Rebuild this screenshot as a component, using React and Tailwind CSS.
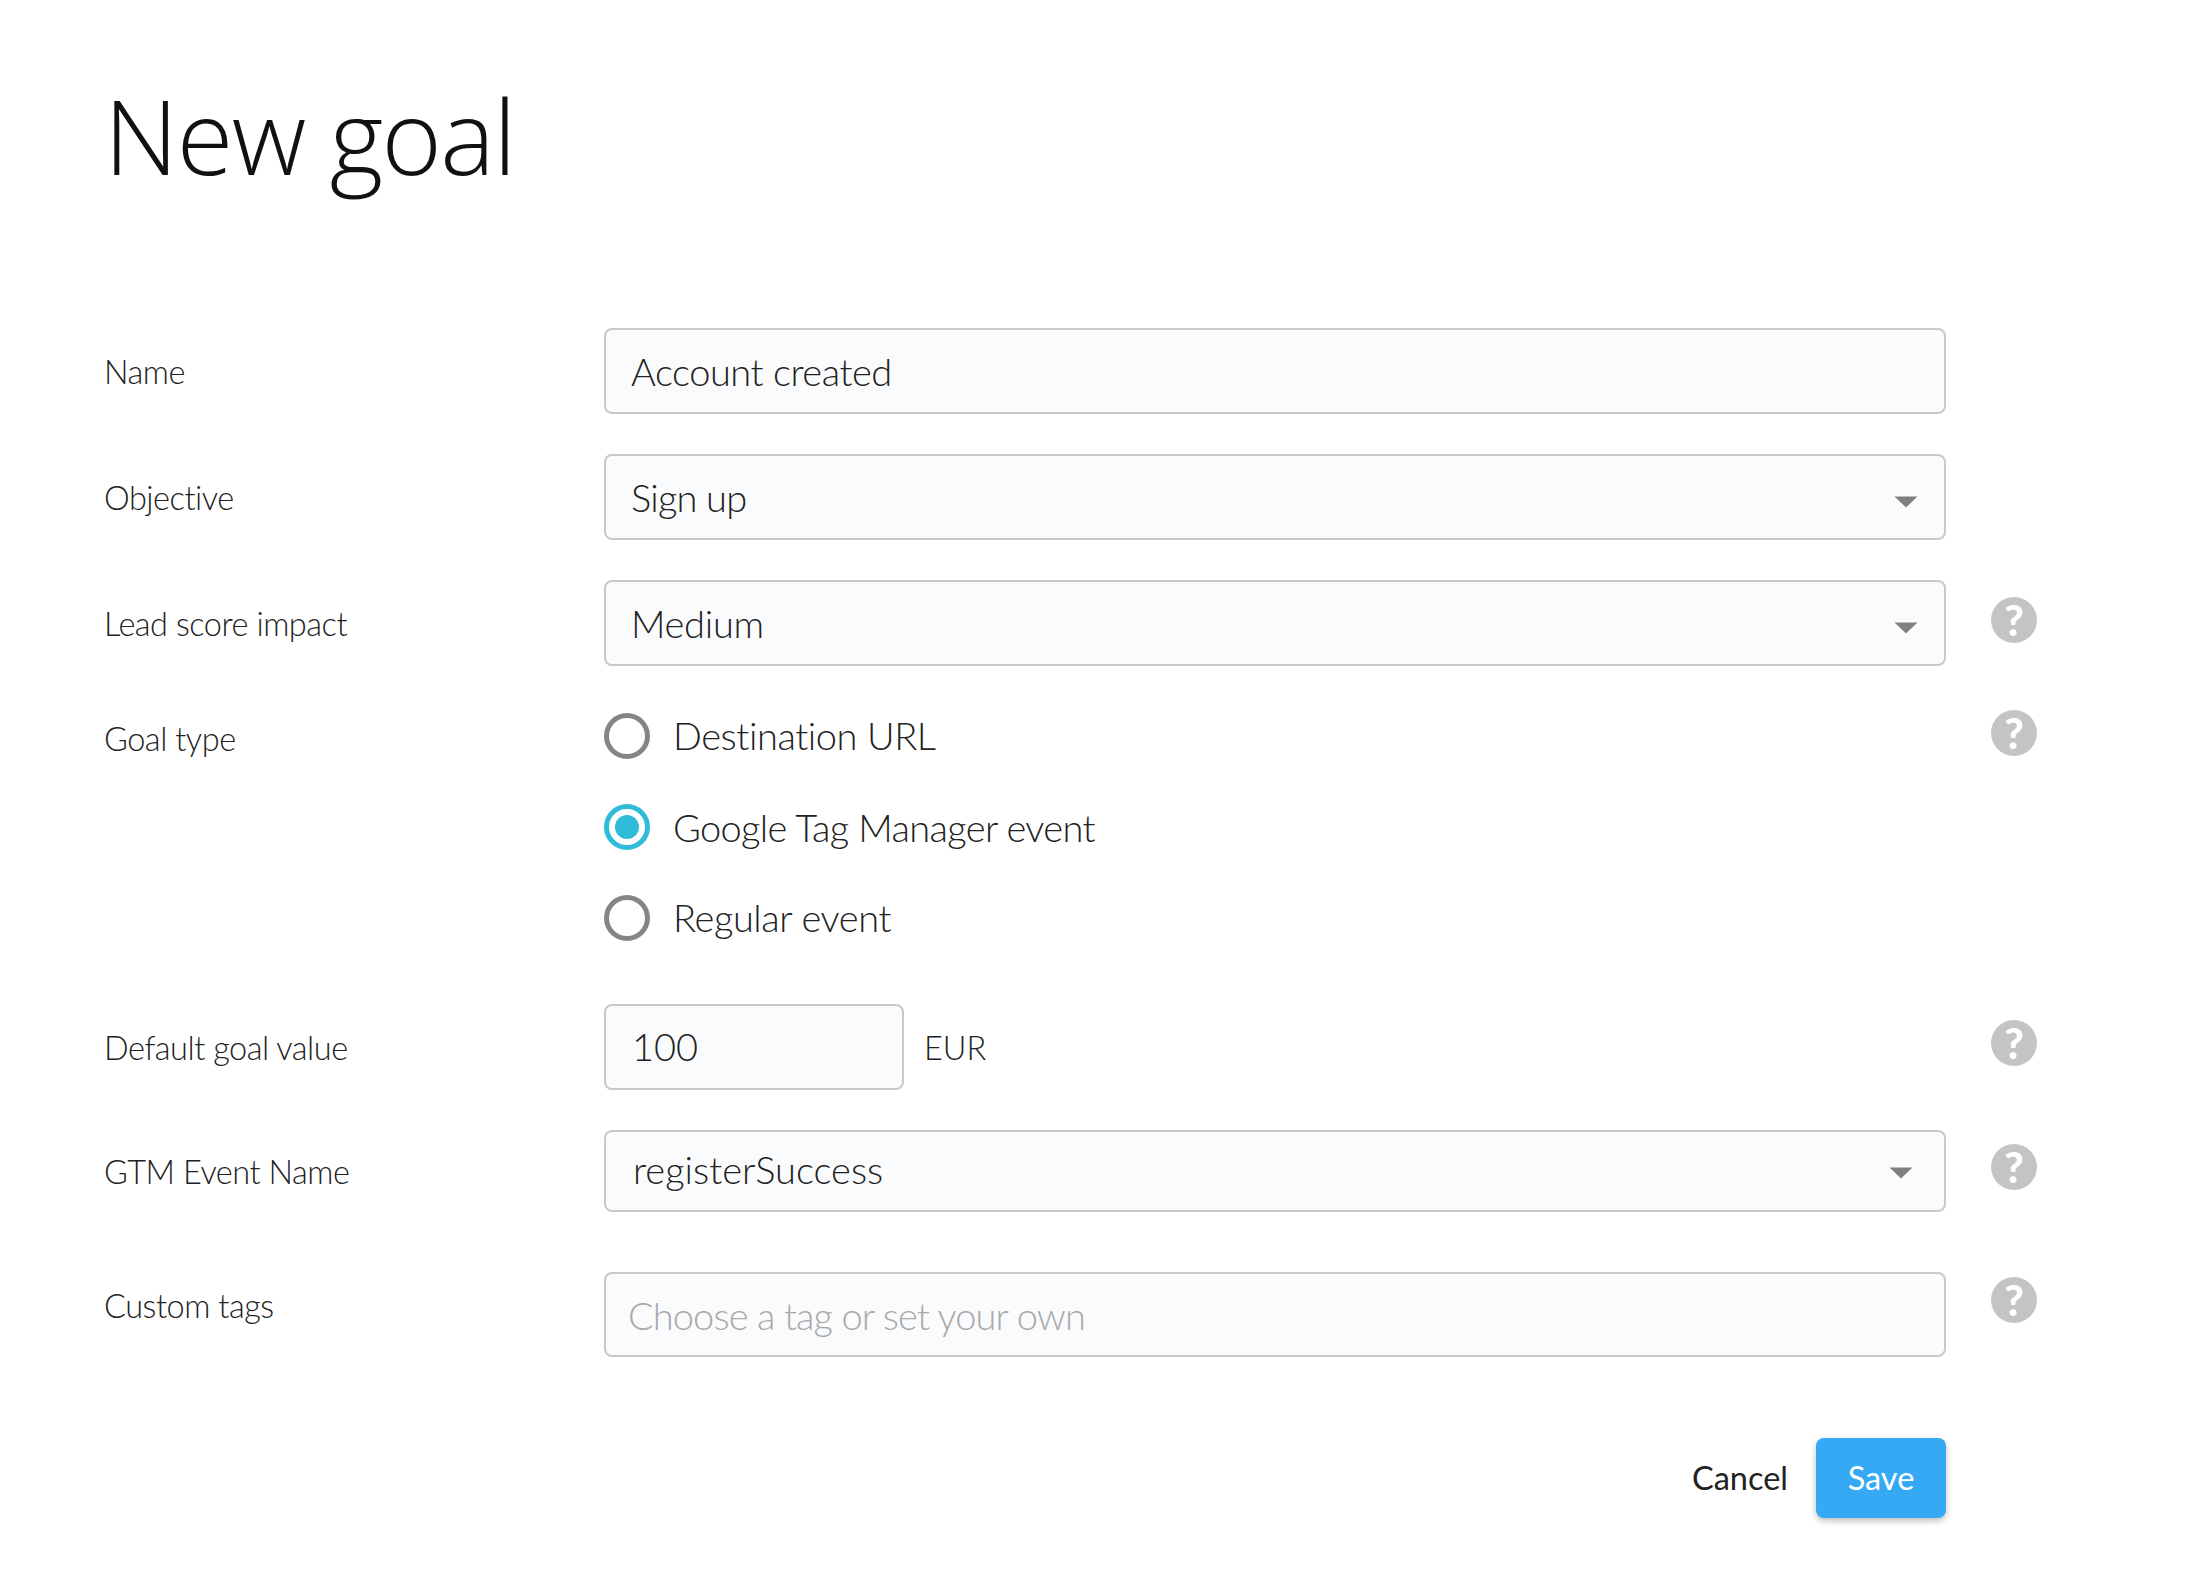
import React from "react";

const Help = ({ className = "" }) => (
    <div className={`w-[46px] h-[46px] rounded-full bg-[#c4c4c4] flex items-center justify-center text-white font-black text-[42px] leading-none font-['Lato',sans-serif] ${className}`}>
        ?
    </div>
);

const Caret = ({ className = "" }) => (
    <svg width="24" height="12" viewBox="0 0 24 12" className={className}>
        <path d="M0.5 0.5 L23.5 0.5 L12 11.5 Z" fill="#808080" />
    </svg>
);

const Row = ({ label, labelClass = "items-center pt-[2px]", help, helpClass = "", className = "", children }) => (
    <div className={`flex ${className}`}>
        <div className={`w-[500px] flex text-[32.5px] font-light text-[#222] tracking-[-0.47px] ${labelClass}`}>{label}</div>
        <div className="w-[1342px]">{children}</div>
        <div className="w-[91px] flex justify-end items-start">{help && <Help className={helpClass} />}</div>
    </div>
);

const Field = ({ value, height = "h-[86px]", pad = "pl-[25px]", caretClass = "mr-[26px] mt-[10px]" }) => (
    <div className={`${height} ${pad} flex items-center justify-between border-2 border-[#c9c9c9] rounded-[8px] bg-[#fafbfd] text-[38px] font-light text-[#222]`}>
        <span>{value}</span>
        <Caret className={caretClass} />
    </div>
);

const Radio = ({ label, checked, textClass = "" }) => (
    <label className="flex items-center h-[46px]">
        <span className={`w-[46px] h-[46px] rounded-full border-[5px] flex items-center justify-center ${checked ? "border-[#2fbcd8]" : "border-[#858585]"}`}>
            {checked && <span className="w-[24px] h-[24px] rounded-full bg-[#2fbcd8]" />}
        </span>
        <span className={`ml-[23px] text-[38px] font-light text-[#222] ${textClass}`}>{label}</span>
    </label>
);

export default function App() {
    return (
        <div className="min-h-[1593px] bg-white pl-[104px] font-['Lato',sans-serif]">
            <h1 className="h-[328px] pt-[70px] text-[103px] leading-[130px] font-light text-[#111] tracking-[-1.6px] font-['Open_Sans',sans-serif]">New goal</h1>

            <Row label="Name">
                <input
                    readOnly
                    value="Account created"
                    className="w-full h-[86px] pl-[25px] border-2 border-[#c9c9c9] rounded-[8px] bg-[#fafbfd] text-[38px] font-light text-[#222] outline-none tracking-[-0.45px]"
                />
            </Row>
            <Row label="Objective" className="mt-[40px]">
                <Field value={<span className="tracking-[-0.8px]">Sign up</span>} />
            </Row>
            <Row label="Lead score impact" help helpClass="mt-[17px]" className="mt-[40px]">
                <Field value={<span className="tracking-[-0.3px]">Medium</span>} />
            </Row>

            <Row label="Goal type" labelClass="items-start pt-[5px]" help className="mt-[44px]">
                <div className="flex flex-col gap-[45px] pt-[3px]">
                    <Radio label="Destination URL" textClass="pb-[1px] tracking-[-0.42px]" />
                    <Radio label="Google Tag Manager event" checked textClass="tracking-[-0.65px]" />
                    <Radio label="Regular event" textClass="pb-[1px] tracking-[-0.4px]" />
                </div>
            </Row>

            <Row label="Default goal value" help helpClass="mt-[16px]" className="mt-[63px]">
                <div className="flex items-center">
                    <input
                        readOnly
                        value="100"
                        className="w-[300px] h-[86px] pl-[26px] pb-[3px] border-2 border-[#c9c9c9] rounded-[8px] bg-[#fafbfd] text-[38px] font-light text-[#222] outline-none"
                    />
                    <span className="ml-[20px] pt-[2px] text-[32.5px] font-light text-[#222]">EUR</span>
                </div>
            </Row>
            <Row label="GTM Event Name" help helpClass="mt-[14px]" className="mt-[40px]">
                <Field value={<span className="block pb-[3px]">registerSuccess</span>} height="h-[82px]" pad="pl-[27px]" caretClass="mr-[31px] mt-[4px]" />
            </Row>
            <Row label="Custom tags" labelClass="items-start pt-[10px]" help helpClass="mt-[5px]" className="mt-[60px]">
                <input
                    readOnly
                    placeholder="Choose a tag or set your own"
                    className="w-full h-[85px] pl-[22px] border-2 border-[#c9c9c9] rounded-[8px] bg-[#fafbfd] text-[38px] font-light text-[#222] placeholder:text-[#a9a9a9] placeholder:opacity-100 outline-none tracking-[-0.9px]"
                />
            </Row>

            <div className="w-[1842px] mt-[81px] flex justify-end items-center">
                <button className="mr-[28px] text-[32.5px] text-[#222]">Cancel</button>
                <button className="w-[130px] h-[80px] rounded-[8px] bg-[#36a9f5] text-white text-[32.5px] shadow-[0_3px_6px_rgba(0,0,0,0.25)]">Save</button>
            </div>
        </div>
    );
}
